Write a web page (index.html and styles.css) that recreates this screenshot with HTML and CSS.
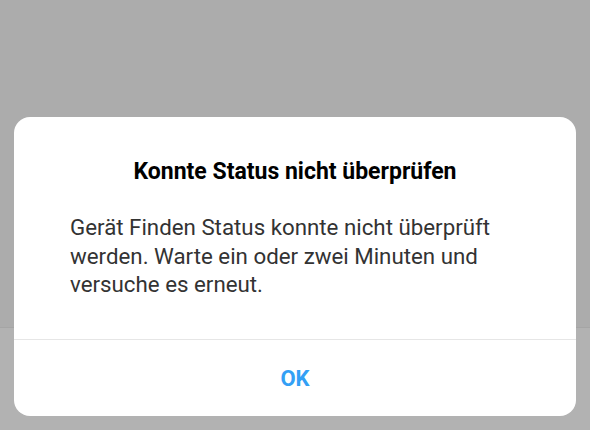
FILE: index.html
```html
<!DOCTYPE html>
<html lang="de">
<head>
<meta charset="utf-8">
<title>Konnte Status nicht überprüfen</title>
<link rel="stylesheet" href="styles.css">
</head>
<body>
<div class="screen">
  <div class="behind-top"></div>
  <div class="behind-bottom"></div>
  <div class="dialog" role="dialog">
    <h1 class="dialog-title">Konnte Status nicht überprüfen</h1>
    <p class="dialog-text">Gerät Finden Status konnte nicht überprüft werden. Warte ein oder zwei Minuten und versuche es erneut.</p>
    <div class="dialog-actions">
      <button class="dialog-button" type="button">OK</button>
    </div>
  </div>
</div>
</body>
</html>
```
FILE: styles.css
```css
html, body {
  margin: 0;
  padding: 0;
}
body {
  font-family: Roboto, "Noto Sans", "Liberation Sans", sans-serif;
  background: #acacac;
}
.screen {
  position: relative;
  width: 590px;
  height: 430px;
  overflow: hidden;
  display: flex;
  flex-direction: column;
  background: #acacac;
}
.behind-top {
  height: 327px;
  background: #acacac;
}
.behind-bottom {
  flex: 1;
  background: #b2b2b2;
  border-top: 1px solid #a5a5a5;
}
.dialog {
  position: absolute;
  left: 14px;
  top: 117px;
  width: 562px;
  height: 299px;
  background: #ffffff;
  border-radius: 16px;
  display: flex;
  flex-direction: column;
  box-sizing: border-box;
  padding-top: 41px;
}
.dialog-title {
  margin: 0;
  font-size: 23px;
  line-height: 28px;
  font-weight: 700;
  color: #000000;
  text-align: center;
}
.dialog-text {
  margin: 27px 0 0 0;
  padding: 0 56px 40px 56px;
  font-size: 22.3px;
  line-height: 28.5px;
  font-weight: 400;
  color: #333333;
  border-bottom: 1px solid #e6e6e6;
}
.dialog-actions {
  flex: 1;
  display: flex;
  align-items: center;
  justify-content: center;
  padding-top: 2px;
}
.dialog-button {
  background: none;
  border: none;
  padding: 0;
  font-family: inherit;
  font-size: 22px;
  font-weight: 700;
  color: #33a0f5;
  line-height: 28px;
}
```
